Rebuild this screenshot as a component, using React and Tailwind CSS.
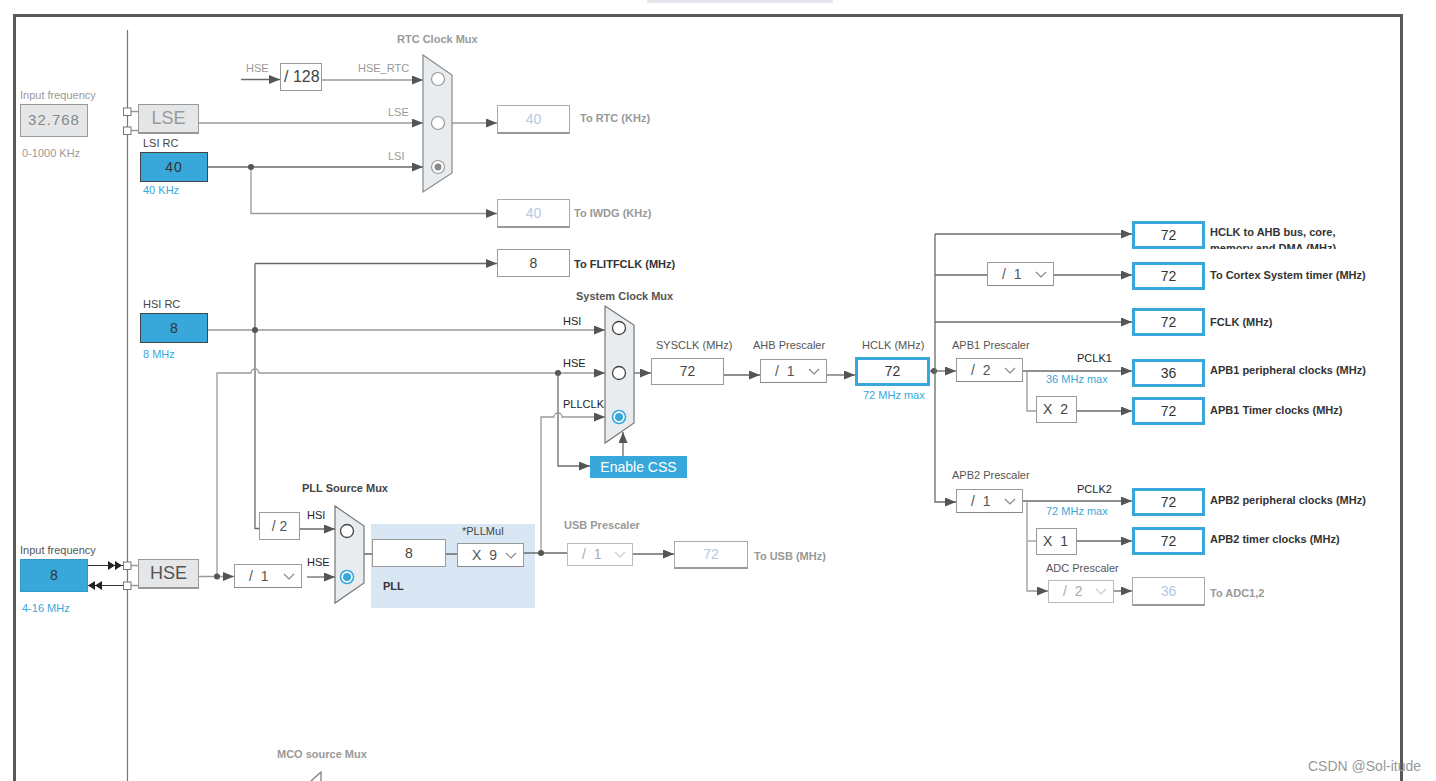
import React from "react";

const BLUE = "#38a8db";

function Label({ className = "", children }) {
  return (
    <div className={"absolute whitespace-nowrap text-[11px] leading-[14px] " + className}>
      {children}
    </div>
  );
}

function ValueBox({ className = "", children, kind = "plain" }) {
  const look =
    kind === "active"
      ? "border-[3px] border-[#38a8db] text-[#333]"
      : kind === "off"
      ? "border border-[#aaa] border-b-2 border-b-[#999] text-[#b4c7e7]"
      : "border border-[#999] text-[#444]";
  return (
    <div className={"absolute flex items-center justify-center bg-white text-[14px] " + look + " " + className}>
      {children}
    </div>
  );
}

function Select({ className = "", value, off = false }) {
  return (
    <div
      className={
        "absolute flex items-center justify-between bg-white pl-[14px] pr-[6px] text-[14px] border " +
        (off ? "border-[#bbb] text-[#aaa]" : "border-[#999] border-b-[#888] text-[#555]") +
        " " +
        className
      }
    >
      <span className="tracking-[2px]">{value}</span>
      <svg width="12" height="7" viewBox="0 0 12 7">
        <polyline points="1,1 6,6 11,1" fill="none" stroke={off ? "#ccc" : "#888"} strokeWidth="1.2" />
      </svg>
    </div>
  );
}

function Radio({ cx, cy, on, tone = "blue" }) {
  if (tone === "gray") {
    return (
      <g>
        <circle cx={cx} cy={cy} r="6.5" fill="white" stroke="#999" strokeWidth="1.2" />
        {on && <circle cx={cx} cy={cy} r="3.5" fill="#8a8a8a" />}
      </g>
    );
  }
  return on ? (
    <g>
      <circle cx={cx} cy={cy} r="6.5" fill="white" stroke={BLUE} strokeWidth="1.6" />
      <circle cx={cx} cy={cy} r="4" fill={BLUE} />
    </g>
  ) : (
    <circle cx={cx} cy={cy} r="6.5" fill="white" stroke="#444" strokeWidth="1.3" />
  );
}

function Wires() {
  const w = { fill: "none", stroke: "#6a6a6a", strokeWidth: 1.3 };
  const lw = { fill: "none", stroke: "#9a9a9a", strokeWidth: 1.3 };
  const a = "url(#ah)";
  return (
    <svg className="absolute left-0 top-0 pointer-events-none" width="1436" height="781">
      <defs>
        <marker id="ah" markerUnits="userSpaceOnUse" markerWidth="12" markerHeight="10" refX="11" refY="4.5" orient="auto">
          <path d="M0,0 L11,4.5 L0,9 Z" fill="#555" />
        </marker>
      </defs>

      {/* bus line */}
      <path d="M127.5 30 V781" stroke="#777" strokeWidth="1.2" fill="none" />

      {/* connectors */}
      <path d="M131 111.5 H138 M131 130.5 H138 M131 565.5 H138 M131 585.5 H138" {...lw} />
      <rect x="123.5" y="108" width="7.5" height="7.5" fill="white" stroke="#777" />
      <rect x="123.5" y="127" width="7.5" height="7.5" fill="white" stroke="#777" />
      <rect x="123.5" y="562" width="7.5" height="7.5" fill="white" stroke="#777" />
      <rect x="123.5" y="582" width="7.5" height="7.5" fill="white" stroke="#777" />

      {/* RTC */}
      <path d="M241 79.5 H280" {...w} markerEnd={a} />
      <path d="M322 80 H423" {...lw} markerEnd={a} />
      <path d="M199 123 H423" {...lw} markerEnd={a} />
      <path d="M208 167 H423" {...w} markerEnd={a} />
      <path d="M251 167 V213.5 H497" {...lw} markerEnd={a} />
      <circle cx="251" cy="167" r="3" fill="#555" />
      <path d="M452 123 H497" {...lw} markerEnd={a} />
      <polygon points="423,55 452,75 452,173 423,192" fill="#e9ecef" stroke="#888" strokeWidth="1.2" />
      <Radio cx={438} cy={79} tone="gray" />
      <Radio cx={438} cy={123} tone="gray" />
      <Radio cx={438} cy={167} tone="gray" on />

      {/* HSI / FLITF */}
      <path d="M255 263.5 H497" {...w} markerEnd={a} />
      <path d="M255 263.5 V528.5 H259" {...w} />
      <path d="M208 330 H605" {...lw} markerEnd={a} />
      <circle cx="255" cy="330" r="3" fill="#555" />

      {/* HSE routing */}
      <path d="M217 577 V373 H251 A4 4 0 0 1 259 373 H605" {...lw} markerEnd={a} />
      <circle cx="558" cy="373" r="3" fill="#555" />
      <path d="M558 373 V466 H590" {...w} markerEnd={a} />
      <path d="M541 553 V417 H554 A4 4 0 0 1 562 417 H605" {...lw} markerEnd={a} />
      <path d="M623 456 V432" {...w} markerEnd={a} />

      {/* system mux */}
      <polygon points="605,306 634,325 634,423 605,443" fill="#e9ecef" stroke="#777" strokeWidth="1.2" />
      <Radio cx={619} cy={328} />
      <Radio cx={619} cy={373} />
      <Radio cx={619} cy={417} on />

      <path d="M634 373 H651" {...w} markerEnd={a} />
      <path d="M724 375 H760" {...w} markerEnd={a} />
      <path d="M827 375 H855" {...w} markerEnd={a} />
      <path d="M930 371 H956" {...w} markerEnd={a} />
      <circle cx="934" cy="371" r="3" fill="#555" />

      {/* HCLK fan out */}
      <path d="M935 234 V502 H956" {...w} markerEnd={a} />
      <path d="M935 234 H1132" {...w} markerEnd={a} />
      <path d="M935 275 H987" {...w} />
      <path d="M1054 275 H1132" {...w} markerEnd={a} />
      <path d="M935 322 H1132" {...w} markerEnd={a} />

      {/* APB1 */}
      <path d="M1023 371 H1132" {...w} markerEnd={a} />
      <path d="M1027 371 V411 H1036" {...lw} />
      <path d="M1077 411 H1132" {...w} markerEnd={a} />

      {/* APB2 */}
      <path d="M1023 501 H1132" {...w} markerEnd={a} />
      <path d="M1027 501 V591 H1048" {...lw} markerEnd={a} />
      <path d="M1027 541 H1036" {...lw} />
      <path d="M1077 541 H1132" {...w} markerEnd={a} />
      <path d="M1114 591 H1132" {...w} markerEnd={a} />

      {/* HSE input arrows */}
      <path d="M88 565.5 H123 M88 585.5 H123" stroke="#333" strokeWidth="1.2" fill="none" />
      <path d="M108 561 L115 565.5 L108 570 Z M115 561 L122 565.5 L115 570 Z" fill="#222" />
      <path d="M95 581 L88 585.5 L95 590 Z M102 581 L95 585.5 L102 590 Z" fill="#222" />
      <path d="M199 576.5 H234" {...lw} markerEnd={a} />
      <circle cx="217" cy="576.5" r="3" fill="#555" />

      {/* PLL */}
      <path d="M300 529 H335" {...w} markerEnd={a} />
      <path d="M307 577 H335" {...w} markerEnd={a} />
      <polygon points="335,506 364,526 364,583 335,603" fill="#e9ecef" stroke="#777" strokeWidth="1.2" />
      <Radio cx={347} cy={531} />
      <Radio cx={347} cy={577} on />
      <path d="M364 554 H372 M446 554 H457" {...w} />
      <path d="M524 553 H567" {...w} />
      <circle cx="541" cy="553" r="3" fill="#555" />
      <path d="M633 554 H674" {...w} markerEnd={a} />

      {/* MCO */}
      <path d="M311 781 L321 772 V781" fill="none" stroke="#777" strokeWidth="1.2" />
    </svg>
  );
}

export default function App() {
  return (
    <div className="relative w-[1436px] h-[781px] overflow-hidden bg-white font-['Liberation_Sans',Arial,sans-serif]">
      <div className="absolute left-[647px] top-0 w-[186px] h-[3px] bg-[#e3e7eb]" />

      <div className="pt-[14px] pl-[13px]">
        <div className="w-[1390px] h-[800px] border-[3px] border-b-0 border-[#595959]" />
      </div>

      <div className="absolute left-[371px] top-[524px] w-[164px] h-[84px] bg-[#d9e7f4]" />

      <Wires />

      {/* left column: LSE input */}
      <Label className="left-[20px] top-[88px] text-[#999]">Input frequency</Label>
      <div className="absolute left-[20px] top-[104px] w-[68px] h-[33px] flex items-center justify-center bg-[#e4e6e8] border border-[#999] text-[15px] tracking-[1px] text-[#888]">
        32.768
      </div>
      <Label className="left-[22px] top-[146px] text-[#999]">0-1000 KHz</Label>

      <div className="absolute left-[138px] top-[104px] w-[61px] h-[30px] flex items-center justify-center bg-[#e4e6e8] border border-[#999] border-b-2 text-[18px] text-[#999]">
        LSE
      </div>

      <Label className="left-[143px] top-[136px] text-[#444]">LSI RC</Label>
      <div className="absolute left-[140px] top-[152px] w-[68px] h-[30px] flex items-center justify-center bg-[#38a8db] border border-[#444] text-[14px] tracking-[1px] text-[#333]">
        40
      </div>
      <Label className="left-[143px] top-[183px] text-[#38a8db]">40 KHz</Label>

      {/* RTC */}
      <Label className="left-[397px] top-[32px] font-bold text-[#999]">RTC Clock Mux</Label>
      <Label className="left-[246px] top-[61px] text-[#999]">HSE</Label>
      <div className="absolute left-[280px] top-[63px] w-[42px] h-[28px] flex items-center pl-[3px] bg-white border border-[#999] text-[16px] text-[#444]">
        / 128
      </div>
      <Label className="left-[358px] top-[61px] text-[#999]">HSE_RTC</Label>
      <Label className="left-[388px] top-[105px] text-[#999]">LSE</Label>
      <Label className="left-[388px] top-[149px] text-[#999]">LSI</Label>

      <ValueBox kind="off" className="left-[497px] top-[105px] w-[73px] h-[29px]">40</ValueBox>
      <Label className="left-[580px] top-[111px] font-bold text-[#999]">To RTC (KHz)</Label>
      <ValueBox kind="off" className="left-[497px] top-[199px] w-[73px] h-[29px]">40</ValueBox>
      <Label className="left-[574px] top-[206px] font-bold text-[#999]">To IWDG (KHz)</Label>

      <ValueBox className="left-[497px] top-[249px] w-[73px] h-[28px]">8</ValueBox>
      <Label className="left-[574px] top-[257px] font-bold text-[#333]">To FLITFCLK (MHz)</Label>

      {/* HSI */}
      <Label className="left-[143px] top-[297px] text-[#444]">HSI RC</Label>
      <div className="absolute left-[140px] top-[313px] w-[68px] h-[30px] flex items-center justify-center bg-[#38a8db] border border-[#444] text-[14px] text-[#333]">
        8
      </div>
      <Label className="left-[143px] top-[347px] text-[#38a8db]">8 MHz</Label>

      {/* system clock mux */}
      <Label className="left-[576px] top-[289px] font-bold text-[#555]">System Clock Mux</Label>
      <Label className="left-[563px] top-[314px] text-[#222]">HSI</Label>
      <Label className="left-[563px] top-[356px] text-[#222]">HSE</Label>
      <Label className="left-[563px] top-[397px] text-[#222]">PLLCLK</Label>
      <div className="absolute left-[590px] top-[456px] w-[97px] h-[22px] flex items-center justify-center bg-[#38a8db] text-[14px] text-white">
        Enable CSS
      </div>

      <Label className="left-[656px] top-[338px] text-[#555]">SYSCLK (MHz)</Label>
      <ValueBox className="left-[651px] top-[358px] w-[73px] h-[27px]">72</ValueBox>
      <Label className="left-[753px] top-[338px] text-[#555]">AHB Prescaler</Label>
      <Select className="left-[760px] top-[359px] w-[67px] h-[24px]" value="/ 1" />
      <Label className="left-[862px] top-[338px] text-[#555]">HCLK (MHz)</Label>
      <ValueBox kind="active" className="left-[855px] top-[357px] w-[75px] h-[29px]">72</ValueBox>
      <Label className="left-[863px] top-[388px] text-[#38a8db]">72 MHz max</Label>

      {/* HCLK outputs */}
      <ValueBox kind="active" className="left-[1132px] top-[221px] w-[73px] h-[28px]">72</ValueBox>
      <div className="absolute left-[1210px] top-[224px] h-[25px] overflow-hidden text-[11px] leading-[16px] font-bold text-[#333] whitespace-nowrap">
        HCLK to AHB bus, core,
        <br />
        memory and DMA (MHz)
      </div>
      <Select className="left-[987px] top-[262px] w-[67px] h-[24px]" value="/ 1" />
      <ValueBox kind="active" className="left-[1132px] top-[262px] w-[73px] h-[28px]">72</ValueBox>
      <Label className="left-[1210px] top-[268px] font-bold text-[#333]">To Cortex System timer (MHz)</Label>
      <ValueBox kind="active" className="left-[1132px] top-[308px] w-[73px] h-[28px]">72</ValueBox>
      <Label className="left-[1210px] top-[315px] font-bold text-[#333]">FCLK (MHz)</Label>

      {/* APB1 */}
      <Label className="left-[952px] top-[338px] text-[#555]">APB1 Prescaler</Label>
      <Select className="left-[956px] top-[358px] w-[67px] h-[24px]" value="/ 2" />
      <Label className="left-[1077px] top-[351px] text-[#222]">PCLK1</Label>
      <Label className="left-[1046px] top-[372px] text-[#38a8db]">36 MHz max</Label>
      <ValueBox kind="active" className="left-[1132px] top-[359px] w-[73px] h-[28px]">36</ValueBox>
      <Label className="left-[1210px] top-[363px] font-bold text-[#333]">APB1 peripheral clocks (MHz)</Label>
      <ValueBox className="left-[1036px] top-[396px] w-[41px] h-[27px] tracking-[2px]">X 2</ValueBox>
      <ValueBox kind="active" className="left-[1132px] top-[397px] w-[73px] h-[28px]">72</ValueBox>
      <Label className="left-[1210px] top-[403px] font-bold text-[#333]">APB1 Timer clocks (MHz)</Label>

      {/* APB2 */}
      <Label className="left-[952px] top-[468px] text-[#555]">APB2 Prescaler</Label>
      <Select className="left-[956px] top-[489px] w-[67px] h-[24px]" value="/ 1" />
      <Label className="left-[1077px] top-[482px] text-[#222]">PCLK2</Label>
      <Label className="left-[1046px] top-[504px] text-[#38a8db]">72 MHz max</Label>
      <ValueBox kind="active" className="left-[1132px] top-[488px] w-[73px] h-[28px]">72</ValueBox>
      <Label className="left-[1210px] top-[493px] font-bold text-[#333]">APB2 peripheral clocks (MHz)</Label>
      <ValueBox className="left-[1036px] top-[528px] w-[41px] h-[27px] tracking-[2px]">X 1</ValueBox>
      <ValueBox kind="active" className="left-[1132px] top-[527px] w-[73px] h-[28px]">72</ValueBox>
      <Label className="left-[1210px] top-[532px] font-bold text-[#333]">APB2 timer clocks (MHz)</Label>
      <Label className="left-[1046px] top-[561px] text-[#555]">ADC Prescaler</Label>
      <Select off className="left-[1048px] top-[580px] w-[66px] h-[23px]" value="/ 2" />
      <ValueBox kind="off" className="left-[1132px] top-[577px] w-[73px] h-[29px]">36</ValueBox>
      <Label className="left-[1210px] top-[586px] font-bold text-[#999]">To ADC1,2</Label>

      {/* HSE input */}
      <Label className="left-[20px] top-[543px] text-[#555]">Input frequency</Label>
      <div className="absolute left-[20px] top-[559px] w-[68px] h-[33px] flex items-center justify-center bg-[#38a8db] border border-[#3399c9] text-[14px] text-[#333]">
        8
      </div>
      <Label className="left-[22px] top-[601px] text-[#38a8db]">4-16 MHz</Label>
      <div className="absolute left-[138px] top-[559px] w-[61px] h-[30px] flex items-center justify-center bg-[#e4e6e8] border border-[#999] border-b-2 text-[18px] text-[#555]">
        HSE
      </div>

      {/* PLL */}
      <Label className="left-[302px] top-[481px] font-bold text-[#444]">PLL Source Mux</Label>
      <ValueBox className="left-[259px] top-[512px] w-[41px] h-[28px] text-[#555]">/ 2</ValueBox>
      <Label className="left-[307px] top-[508px] text-[#223]">HSI</Label>
      <Select className="left-[234px] top-[564px] w-[68px] h-[24px]" value="/ 1" />
      <Label className="left-[307px] top-[555px] text-[#223]">HSE</Label>
      <ValueBox className="left-[372px] top-[539px] w-[74px] h-[28px]">8</ValueBox>
      <Label className="left-[462px] top-[524px] text-[#444]">*PLLMul</Label>
      <Select className="left-[457px] top-[543px] w-[67px] h-[24px]" value="X 9" />
      <Label className="left-[383px] top-[579px] font-bold text-[#333]">PLL</Label>

      {/* USB */}
      <Label className="left-[564px] top-[518px] font-bold text-[#999]">USB Prescaler</Label>
      <Select off className="left-[567px] top-[543px] w-[66px] h-[23px]" value="/ 1" />
      <ValueBox kind="off" className="left-[674px] top-[541px] w-[74px] h-[28px]">72</ValueBox>
      <Label className="left-[754px] top-[549px] font-bold text-[#999]">To USB (MHz)</Label>

      <Label className="left-[277px] top-[747px] font-bold text-[#999]">MCO source Mux</Label>

      <div className="absolute left-[1308px] top-[758px] whitespace-nowrap text-[14px] leading-[16px] text-[#999]">
        CSDN @Sol-itude
      </div>
    </div>
  );
}
